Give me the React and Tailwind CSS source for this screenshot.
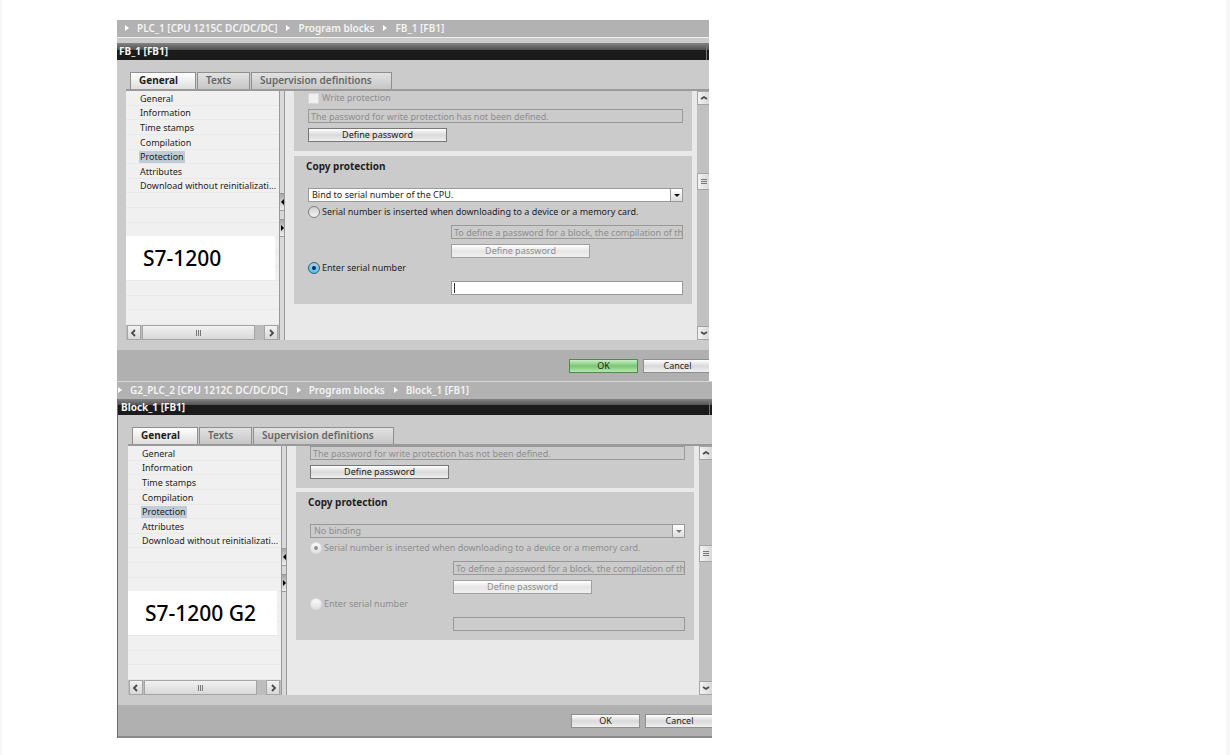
import clsx from 'clsx';

const NAV_ITEMS = [
  'General',
  'Information',
  'Time stamps',
  'Compilation',
  'Protection',
  'Attributes',
  'Download without reinitializati...',
];

// The tree keeps drawing empty grid rows below the last entry
const NAV_ROWS = 16;

const DIALOGS = [
  {
    id: 's7-1200',
    badge: 'S7-1200',
    title: 'FB_1 [FB1]',
    path: ['PLC_1 [CPU 1215C DC/DC/DC]', 'Program blocks', 'FB_1 [FB1]'],
    binding: 'Bind to serial number of the CPU.',
    enabled: true,
    mode: 'enter',
  },
  {
    id: 's7-1200-g2',
    badge: 'S7-1200 G2',
    title: 'Block_1 [FB1]',
    path: ['G2_PLC_2 [CPU 1212C DC/DC/DC]', 'Program blocks', 'Block_1 [FB1]'],
    binding: 'No binding',
    enabled: false,
    mode: 'inserted',
  },
];

function App() {
  return (
    <div className="min-h-screen border-l-2 border-r-4 border-[#f7f7f7] bg-white pt-5 pl-[115px] font-['Noto_Sans',sans-serif] text-[9px] leading-3 text-[#1e1e1e]">
      <DialogWindow dialog={DIALOGS[0]} />
      <DialogWindow dialog={DIALOGS[1]} second />
    </div>
  );
}

function DialogWindow({ dialog, second }) {
  return (
    <section
      className={clsx(
        'w-full overflow-hidden bg-[#cbcbcb]',
        second ? 'max-w-[595px] border-t border-[#d6d6d6]' : 'max-w-[592px]'
      )}
    >
      <Breadcrumb path={dialog.path} second={second} />
      <div className={second ? 'border-l border-[#6a6a6a]' : ''}>
        <header
          className={clsx(
            'flex bg-linear-to-b from-[#858585] from-0% via-[#505050] via-40% to-[#1b1b1b] to-40% pl-[2px]',
            second ? 'h-4' : 'h-[17px]'
          )}
        >
          <h1 className={clsx('flex-1 text-[10px] leading-4 font-bold text-[#f4f4f4]', second && 'pl-px')}>
            {dialog.title}
          </h1>
          <span className="w-[3px] border-l border-[#777]" />
        </header>

        <div className={clsx('pt-3', second ? 'pl-[10px]' : 'pl-[9px]')}>
          <Tabs />
          <div className="flex h-[249px]">
            <Navigation badge={dialog.badge} />
            <Splitter />
            <Content dialog={dialog} />
            <VerticalScrollbar low={second} />
          </div>
        </div>

        <footer
          className={clsx(
            'mt-[10px] flex justify-end gap-[5px] bg-[#b0b0b0] pt-[9px]',
            second ? 'h-[33px] border-b-2 border-[#8a8a8a]' : 'h-[31px]'
          )}
        >
          <PushButton className="w-[69px]" green={dialog.enabled}>OK</PushButton>
          <PushButton className={clsx('w-[69px]', second ? '-mr-[2px]' : '-mr-[3px]')}>Cancel</PushButton>
        </footer>
      </div>
    </section>
  );
}

function Breadcrumb({ path, second }) {
  return (
    <nav
      aria-label="Breadcrumb"
      className={clsx(
        'flex h-[17px] items-start bg-[#b2b2b2] pt-[2px] text-[10px] font-semibold text-[#f4f4f4]',
        second ? 'pl-px' : 'mb-[6px] pl-2 shadow-[0_1px_0_#efefef]'
      )}
    >
      {path.map((part) => (
        <span key={part} className="flex items-center whitespace-nowrap">
          <svg className="mr-2 h-[6px] w-1" viewBox="0 0 4 6" fill="#fff">
            <path d="M0 0L4 3L0 6Z" />
          </svg>
          <a href="#" className="mr-[9px]">{part}</a>
        </span>
      ))}
    </nav>
  );
}

function Tabs() {
  const tab = 'flex h-[17px] items-start border border-b-0 border-[#8f8f8f] pl-2 text-[10px] leading-[14px] whitespace-nowrap';
  return (
    <div role="tablist" className="flex gap-px border-b-2 border-[#9a9a9a] pl-1">
      <button role="tab" aria-selected="true" className={clsx(tab, 'w-[66px] bg-linear-to-b from-white to-[#dedede] font-bold')}>
        General
      </button>
      <button role="tab" className={clsx(tab, 'w-[53px] bg-linear-to-b from-[#e2e2e2] to-[#c6c6c6] font-semibold text-[#666]')}>
        Texts
      </button>
      <button role="tab" className={clsx(tab, 'w-[141px] bg-linear-to-b from-[#e2e2e2] to-[#c6c6c6] font-semibold text-[#666]')}>
        Supervision definitions
      </button>
    </div>
  );
}

function Navigation({ badge }) {
  const rows = Array.from({ length: NAV_ROWS }, (_, i) => NAV_ITEMS[i]);
  return (
    <aside className="relative flex w-[153px] flex-none flex-col bg-[#f0f0f0]">
      <ul className="flex min-h-0 flex-1 flex-col">
        {rows.map((item, i) => (
          <li key={i} className="flex flex-1 items-end border-b border-[#e9e9e9] pl-[13px]">
            {item && (
              <a href="#" className={clsx('px-px whitespace-nowrap', item === 'Protection' && 'bg-[#c1cbd8]')}>
                {item}
              </a>
            )}
          </li>
        ))}
      </ul>
      <HorizontalScrollbar />
      <p className="absolute top-[145px] left-0 h-11 w-[149px] bg-white pl-[17px] text-[21px] leading-[45px] font-medium text-black">
        {badge}
      </p>
    </aside>
  );
}

function HorizontalScrollbar() {
  const face = 'flex h-full items-center justify-center border border-[#a5a5a5] bg-linear-to-b from-[#f2f2f2] to-[#d8d8d8]';
  return (
    <div className="flex h-[15px] flex-none bg-[#bdbdbd] px-px">
      <button aria-label="Scroll left" className={clsx(face, 'w-[14px]')}>
        <Chevron d="M5 1L2 4L5 7" />
      </button>
      <div className={clsx(face, 'ml-px w-[113px]')}>
        <svg className="size-[6px]" viewBox="0 0 6 6" stroke="#777">
          <path d="M0.5 0V6M2.5 0V6M4.5 0V6" />
        </svg>
      </div>
      <button aria-label="Scroll right" className={clsx(face, 'ml-auto w-[14px]')}>
        <Chevron d="M3 1L6 4L3 7" />
      </button>
    </div>
  );
}

function VerticalScrollbar({ low }) {
  const face = 'flex items-center justify-center border border-[#a5a5a5] bg-linear-to-r from-[#f2f2f2] to-[#d8d8d8]';
  return (
    <div className={clsx('flex flex-none flex-col bg-[#c1c1c1]', low ? 'w-[13px]' : 'w-3')}>
      <button aria-label="Scroll up" className={clsx(face, 'h-[14px] w-[14px]')}>
        <Chevron d="M1 5L4 3L7 5" />
      </button>
      <div className={clsx(face, 'h-[17px] w-[14px]', low ? 'mt-[85px]' : 'mt-[68px]')}>
        <svg className="size-[6px]" viewBox="0 0 6 6" stroke="#777">
          <path d="M0 0.5H6M0 2.5H6M0 4.5H6" />
        </svg>
      </div>
      <button aria-label="Scroll down" className={clsx(face, 'mt-auto h-[14px] w-[14px]')}>
        <Chevron d="M1 3L4 5L7 3" />
      </button>
    </div>
  );
}

function Chevron({ d }) {
  return (
    <svg className="size-2 flex-none" viewBox="0 0 8 8" fill="none" stroke="#4a4a4a" strokeWidth="1.8">
      <path d={d} />
    </svg>
  );
}

function Splitter() {
  const handle = 'flex h-[18px] items-center justify-center border-y border-[#9a9a9a] bg-linear-to-b from-[#a8a8a8] to-[#efefef]';
  return (
    <div className="w-[6px] flex-none border-x border-[#999] bg-[#d9d9d9] pt-[102px]">
      <div className={handle}>
        <svg className="h-[6px] w-[3px]" viewBox="0 0 3 6"><path d="M3 0L0 3L3 6Z" /></svg>
      </div>
      <div className={clsx(handle, 'mt-2')}>
        <svg className="h-[6px] w-[3px]" viewBox="0 0 3 6"><path d="M0 0L3 3L0 6Z" /></svg>
      </div>
    </div>
  );
}

function Content({ dialog }) {
  const { id, enabled, mode, binding } = dialog;
  const labelColor = enabled ? '' : 'text-[#8e8e8e]';
  return (
    <main className="min-w-0 flex-1 bg-[#e9e9e9] pr-[5px] pl-[9px]">
      <div
        className={clsx(
          'flex flex-col justify-end bg-[#cbcbcb] pr-[9px] pb-[9px] pl-[14px]',
          enabled ? 'h-[60px]' : 'h-[42px]'
        )}
      >
        {enabled && (
          <label className="mb-[5px] flex items-center gap-[3px] text-[#8e8e8e]">
            <input type="checkbox" disabled className="size-[11px] appearance-none border border-[#d8d8d8] bg-[#f0f0f0]" />
            Write protection
          </label>
        )}
        <TextBox label="Write protection state" disabled value="The password for write protection has not been defined." />
        <PushButton className="mt-[5px] w-[139px] border-[#777]">Define password</PushButton>
      </div>

      <div className={clsx('h-[148px] bg-[#cbcbcb] pr-[9px] pl-[14px]', enabled ? 'mt-[5px]' : 'mt-1')}>
        <h2 className="-ml-[2px] h-8 pt-[2px] text-[10px] leading-4 font-bold">Copy protection</h2>
        <div className="relative">
          <select
            aria-label="Binding"
            disabled={!enabled}
            defaultValue={binding}
            className={clsx(
              'block h-[14px] w-full appearance-none border border-[#999] px-[3px] leading-3 opacity-100',
              enabled ? 'bg-white' : 'bg-[#cbcbcb] text-[#8e8e8e]'
            )}
          >
            <option>{binding}</option>
          </select>
          <span className="pointer-events-none absolute top-0 right-0 flex h-[14px] w-[13px] items-center justify-center border border-[#999] bg-linear-to-b from-white to-[#dcdcdc]">
            <svg className="h-[3px] w-[6px]" viewBox="0 0 6 3" fill={enabled ? '#111' : '#777'}>
              <path d="M0 0H6L3 3Z" />
            </svg>
          </span>
        </div>

        <label className={clsx('mt-1 flex h-3 items-center gap-[2px] whitespace-nowrap', labelColor)}>
          <Radio name={id} checked={mode === 'inserted'} disabled={!enabled} />
          Serial number is inserted when downloading to a device or a memory card.
        </label>
        <div className="mt-[7px] ml-[143px]">
          <TextBox label="Block password" disabled value="To define a password for a block, the compilation of the block" />
          <PushButton className="mt-[5px] w-[139px]" disabled>Define password</PushButton>
        </div>
        <label className={clsx('mt-1 flex h-3 items-center gap-[2px] whitespace-nowrap', labelColor)}>
          <Radio name={id} checked={mode === 'enter'} disabled={!enabled} />
          Enter serial number
        </label>
        <div className="relative mt-[7px] ml-[143px]">
          <TextBox label="Serial number" disabled={!enabled} value="" />
          {/* text caret */}
          {enabled && <span className="absolute top-[2px] left-[3px] h-[10px] w-px bg-[#333]" />}
        </div>
      </div>
    </main>
  );
}

function TextBox({ label, value, disabled }) {
  return (
    <input
      type="text"
      aria-label={label}
      defaultValue={value}
      disabled={disabled}
      className={clsx(
        'block h-[14px] w-full flex-none border border-[#999] pl-[2px] leading-3',
        disabled ? 'bg-[#cbcbcb] text-[#8e8e8e]' : 'bg-white'
      )}
    />
  );
}

function Radio({ name, checked, disabled }) {
  const look = disabled
    ? 'border-[#dcdcdc] from-[#fafafa] to-[#e0e0e0]'
    : checked
      ? 'border-[#3f5a70] from-[#a9cdea] to-[#3cc4f2]'
      : 'border-[#7d7d7d] from-[#d0d0d0] to-[#f4f4f4]';
  return (
    <span className="relative flex size-3 flex-none">
      <input
        type="radio"
        name={name}
        defaultChecked={checked}
        disabled={disabled}
        className={clsx('size-3 appearance-none rounded-full border bg-linear-to-b', look)}
      />
      {checked && (
        <span
          className={clsx(
            'pointer-events-none absolute top-1 left-1 size-1 rounded-full',
            disabled ? 'bg-[#909090]' : 'bg-[#0b2f58]'
          )}
        />
      )}
    </span>
  );
}

function PushButton({ className, green, disabled, children }) {
  return (
    <button
      type="button"
      disabled={disabled}
      className={clsx(
        'block h-[14px] flex-none border bg-linear-to-b text-center leading-3',
        green
          ? 'border-[#4d8c4d] from-[#c9efc4] via-[#7cc576] to-[#b5e8af]'
          : disabled
            ? 'border-[#a0a0a0] from-white via-[#e6e6e6] to-[#f0f0f0] text-[#8e8e8e]'
            : 'border-[#8f8f8f] from-white via-[#d9d9d9] to-[#efefef]',
        className
      )}
    >
      {children}
    </button>
  );
}

export default App;
